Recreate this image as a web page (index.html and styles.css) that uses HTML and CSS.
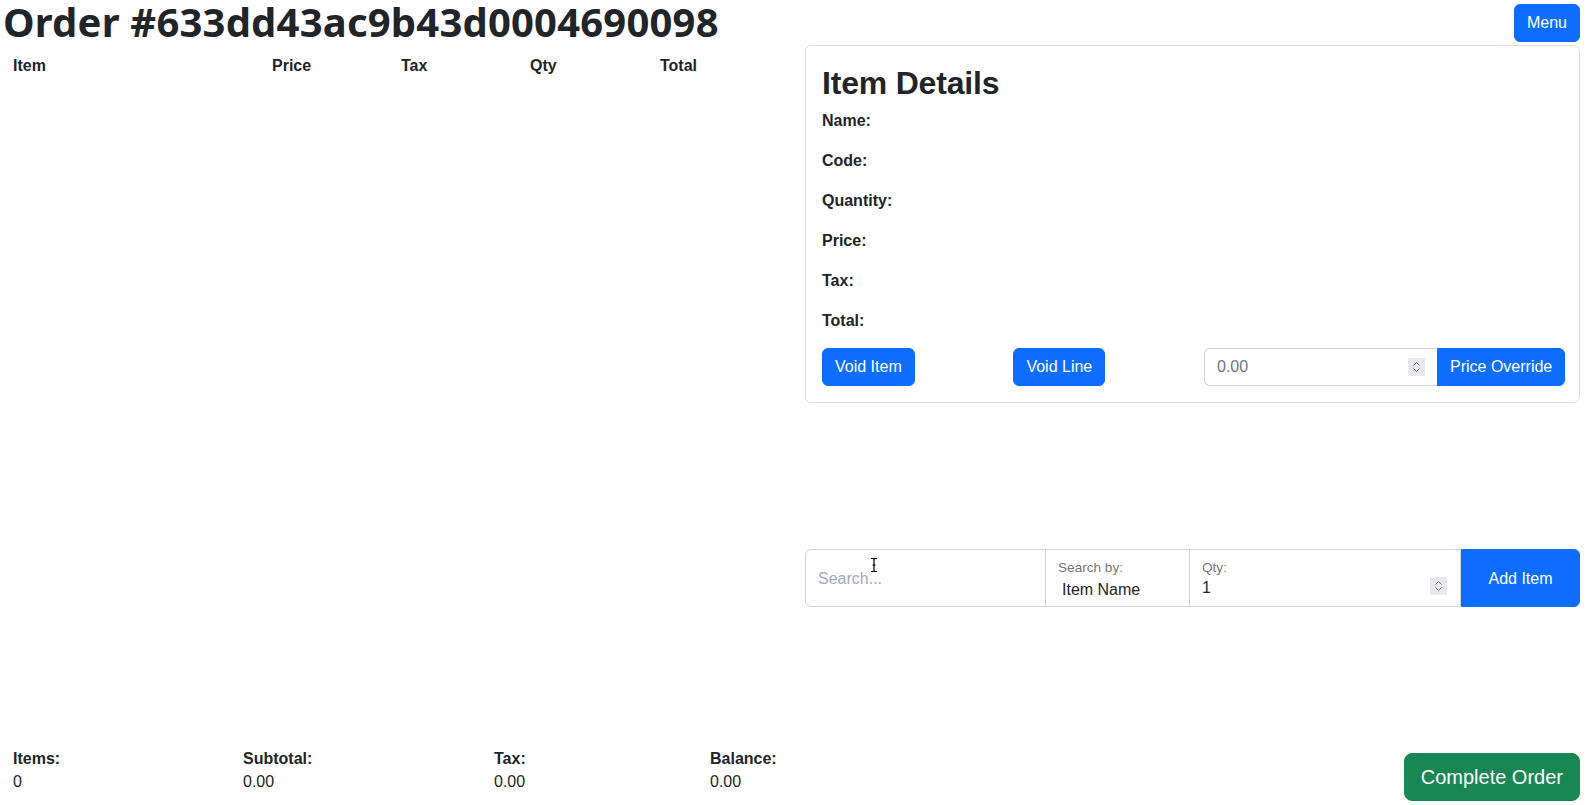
FILE: index.html
```html
<!DOCTYPE html>
<html lang="en">
<head>
<meta charset="utf-8">
<title>Order #633dd43ac9b43d0004690098</title>
<link rel="stylesheet" href="styles.css">
</head>
<body>
<div class="page">
  <div class="left">
    <h1 class="order-title">Order #633dd43ac9b43d0004690098</h1>
    <table class="lines">
      <thead>
        <tr>
          <th class="c-item">Item</th>
          <th class="c-price">Price</th>
          <th class="c-tax">Tax</th>
          <th class="c-qty">Qty</th>
          <th class="c-total">Total</th>
        </tr>
      </thead>
      <tbody></tbody>
    </table>
    <div class="totals">
      <div class="total"><div class="t-label">Items:</div><div class="t-val">0</div></div>
      <div class="total"><div class="t-label">Subtotal:</div><div class="t-val">0.00</div></div>
      <div class="total"><div class="t-label">Tax:</div><div class="t-val">0.00</div></div>
      <div class="total"><div class="t-label">Balance:</div><div class="t-val">0.00</div></div>
    </div>
  </div>

  <div class="right">
    <div class="topbar">
      <button class="btn btn-primary">Menu</button>
    </div>

    <div class="card">
      <div class="card-body">
        <h2 class="card-title">Item Details</h2>
        <p class="detail"><b>Name:</b></p>
        <p class="detail"><b>Code:</b></p>
        <p class="detail"><b>Quantity:</b></p>
        <p class="detail"><b>Price:</b></p>
        <p class="detail"><b>Tax:</b></p>
        <p class="detail"><b>Total:</b></p>
        <div class="actions">
          <button class="btn btn-primary">Void Item</button>
          <button class="btn btn-primary">Void Line</button>
          <div class="override-group">
            <div class="num-box">
              <input class="num-input" type="text" placeholder="0.00">
              <svg class="spin" width="17" height="18" viewBox="0 0 17 18" aria-hidden="true"><rect width="17" height="18" fill="#e9e9ed"/><path d="M5.5 7.5 8.5 4.5 11.5 7.5" fill="none" stroke="#767676" stroke-width="1"/><path d="M5.5 10.5 8.5 13.5 11.5 10.5" fill="none" stroke="#767676" stroke-width="1"/></svg>
            </div>
            <button class="btn btn-primary btn-attached">Price Override</button>
          </div>
        </div>
      </div>
    </div>

    <div class="search-group">
      <div class="field field-search">
        <input class="search-input" type="text" placeholder="Search...">
        <svg class="ibeam" width="8" height="16" viewBox="0 0 8 16" aria-hidden="true"><path d="M1 1.5h2.2L4 2.3l.8-.8H7M4 2.3v11.4M1 14.5h2.2l.8-.8.8.8H7M2.5 8h3" fill="none" stroke="#000" stroke-width="1.2"/></svg>
      </div>
      <div class="field field-by">
        <div class="f-label">Search by:</div>
        <div class="f-value f-select">Item Name</div>
      </div>
      <div class="field field-qty">
        <div class="f-col">
          <div class="f-label">Qty:</div>
          <div class="f-value f-num">1</div>
        </div>
        <svg class="spin spin-qty" width="17" height="18" viewBox="0 0 17 18" aria-hidden="true"><rect width="17" height="18" fill="#e9e9ed"/><path d="M5.5 7.5 8.5 4.5 11.5 7.5" fill="none" stroke="#767676" stroke-width="1"/><path d="M5.5 10.5 8.5 13.5 11.5 10.5" fill="none" stroke="#767676" stroke-width="1"/></svg>
      </div>
      <button class="btn btn-primary btn-add">Add Item</button>
    </div>

    <div class="bottom">
      <button class="btn btn-success btn-lg">Complete Order</button>
    </div>
  </div>
</div>
</body>
</html>
```

FILE: styles.css
```css
html, body {
  margin: 0;
  padding: 0;
  height: 100%;
}

body {
  font-family: "Liberation Sans", Arial, sans-serif;
  font-size: 16px;
  line-height: 1.5;
  color: #212529;
  background: #fff;
  overflow: hidden;
}

.page {
  display: grid;
  grid-template-columns: 1fr 775px;
  column-gap: 10px;
  padding: 0 7px 0 5px;
  height: 805px;
  box-sizing: border-box;
}

/* ---------- left column ---------- */
.left {
  display: flex;
  flex-direction: column;
  min-width: 0;
}

.order-title {
  margin: 0 0 2px -2px;
  font-family: "Noto Sans", "Liberation Sans", sans-serif;
  font-weight: 700;
  font-size: 40px;
  line-height: 44px;
  height: 44px;
  letter-spacing: 0.2px;
  white-space: nowrap;
}

.lines {
  border-collapse: collapse;
  width: 790px;
  table-layout: fixed;
}

.lines th {
  box-sizing: border-box;
  text-align: left;
  font-weight: 700;
  padding: 8px;
  line-height: 24px;
}

.c-item { width: 259px; }
.c-price { width: 129px; }
.c-tax { width: 129px; }
.c-qty { width: 130px; }
.c-total { width: 143px; }

.totals {
  margin-top: auto;
  display: grid;
  grid-template-columns: 230px 251px 216px 1fr;
  padding-bottom: 11px;
}

.total {
  padding: 0 8px;
  line-height: 24px;
}

.t-label {
  font-weight: 700;
  margin-bottom: -1px;
}

/* ---------- buttons ---------- */
.btn {
  font-family: inherit;
  font-size: 16px;
  line-height: 24px;
  padding: 6px 12px;
  border: 1px solid transparent;
  border-radius: 6px;
  cursor: pointer;
  color: #fff;
  white-space: nowrap;
}

.btn-primary {
  background: #0d6efd;
  border-color: #0d6efd;
}

.btn-success {
  background: #198754;
  border-color: #198754;
}

.btn-lg {
  font-size: 20px;
  line-height: 30px;
  padding: 8px 16px;
  border-radius: 8px;
}

/* ---------- right column ---------- */
.right {
  display: flex;
  flex-direction: column;
  min-width: 0;
}

.topbar {
  display: flex;
  justify-content: flex-end;
  padding-top: 4px;
}

.card {
  margin-top: 3px;
  border: 1px solid #dcdcdc;
  border-radius: 6px;
}

.card-body {
  padding: 16px;
}

.card-title {
  margin: 0 0 7px;
  padding-top: 2px;
  font-size: 32px;
  line-height: 38.4px;
  font-weight: 700;
  letter-spacing: -0.2px;
}

.detail {
  margin: 0 0 16px;
  line-height: 24px;
}

.detail:last-of-type {
  margin-bottom: 15px;
}

.actions {
  display: flex;
  justify-content: space-between;
  align-items: center;
}

.override-group {
  display: flex;
  width: 359px;
}

.num-box {
  display: flex;
  align-items: center;
  width: 233px;
  box-sizing: border-box;
  border: 1px solid #ced4da;
  border-right: none;
  border-radius: 6px 0 0 6px;
  padding: 6px 12px;
}

.num-input {
  flex: 1;
  min-width: 0;
  border: none;
  outline: none;
  padding: 0;
  font-family: inherit;
  font-size: 16px;
  line-height: 24px;
  height: 24px;
  color: #212529;
  background: transparent;
}

.num-input::placeholder {
  color: #6c757d;
}

.spin {
  flex: none;
  display: block;
}

.btn-attached {
  flex: 1;
  border-radius: 0 6px 6px 0;
}

/* ---------- search group ---------- */
.search-group {
  margin-top: 146px;
  display: flex;
  height: 58px;
}

.field {
  position: relative;
  box-sizing: border-box;
  height: 58px;
  border: 1px solid #ced4da;
  margin-right: -1px;
  background: #fff;
}

.field-search {
  width: 241px;
  border-radius: 6px 0 0 6px;
  display: flex;
  align-items: center;
  padding: 2px 12px 0;
}

.search-input {
  width: 100%;
  border: none;
  outline: none;
  padding: 0;
  font-family: inherit;
  font-size: 16px;
  line-height: 24px;
  background: transparent;
}

.search-input::placeholder {
  color: #a3a9b6;
}

.ibeam {
  position: absolute;
  left: 64px;
  top: 7px;
}

.field-by {
  width: 145px;
  padding: 8px 12px 0;
}

.field-qty {
  width: 272px;
  padding: 8px 13px 0 12px;
  display: flex;
  justify-content: space-between;
}

.f-col {
  display: flex;
  flex-direction: column;
}

.f-label {
  font-size: 13.6px;
  line-height: 20px;
  color: rgba(33, 37, 41, 0.65);
}

.f-value {
  line-height: 24px;
}

.f-select {
  padding-left: 4px;
}

.f-num {
  margin-top: -2px;
}

.spin-qty {
  align-self: flex-end;
  margin-bottom: 11px;
}

.btn-add {
  flex: 1;
  height: 58px;
  margin-left: 1px;
  padding-top: 8px;
  border-radius: 0 6px 6px 0;
}

.bottom {
  margin-top: auto;
  display: flex;
  justify-content: flex-end;
  padding-bottom: 4px;
}
```
